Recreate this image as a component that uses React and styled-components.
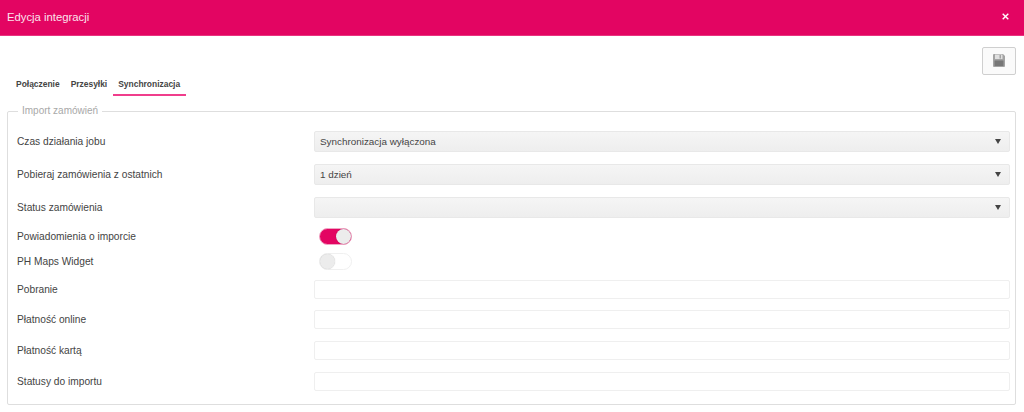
import React from "react";
import styled, { createGlobalStyle } from "styled-components";

const GlobalStyle = createGlobalStyle`
  html, body {
    margin: 0;
    padding: 0;
    background: #fff;
    font-family: "Liberation Sans", Arial, sans-serif;
  }
`;

const Page = styled.div`
  width: 1024px;
  height: 412px;
  overflow: hidden;
  background: #fff;
`;

const Header = styled.header`
  height: 36px;
  box-sizing: border-box;
  padding: 0 15px 2px 7px;
  display: flex;
  align-items: center;
  justify-content: space-between;
  background: #e30562;
  border-bottom: 1px solid #e8347f;
  color: #fff;
`;

const Title = styled.div`
  font-size: 11.3px;
  color: #fbe3ec;
`;

const CloseButton = styled.button`
  border: 0;
  padding: 0;
  background: none;
  display: flex;
  cursor: pointer;
`;

const Toolbar = styled.div`
  display: flex;
  justify-content: flex-end;
  padding: 11px 8px 0 0;
  height: 29px;
`;

const SaveButton = styled.button`
  width: 34px;
  height: 28px;
  box-sizing: border-box;
  padding: 0 0 1px;
  display: flex;
  align-items: center;
  justify-content: center;
  background: #fafafa;
  border: 1px solid #cfcfcf;
  border-radius: 2px;
`;

const Tabs = styled.nav`
  display: flex;
  padding-left: 10.5px;
  height: 20px;
`;

const Tab = styled.div`
  padding: 3px 5.5px 0;
  height: 20px;
  box-sizing: border-box;
  font-size: 8.45px;
  line-height: 11px;
  font-weight: 700;
  color: #444;
  border-bottom: 2px solid ${(p) => (p.$active ? "#f03d8c" : "transparent")};
`;

const Fieldset = styled.fieldset`
  margin: 11px 8px 0 7px;
  padding: 16px 5px 0 9px;
  height: 298px;
  box-sizing: border-box;
  border: 1px solid #dedede;
  border-radius: 2px;
  min-width: 0;
`;

const Legend = styled.legend`
  margin-left: 1px;
  padding: 0 4px;
  font-size: 10px;
  line-height: 8px;
  color: #a8a8a8;
`;

const Row = styled.div`
  display: grid;
  grid-template-columns: 297px 1fr;
  align-items: center;
  height: ${(p) => p.$height}px;
  margin-bottom: ${(p) => p.$gap}px;
`;

const Label = styled.label`
  font-size: 10.2px;
  color: #444;
`;

const SelectBox = styled.div`
  height: 21px;
  box-sizing: border-box;
  padding: 0 8px 0 5px;
  display: flex;
  align-items: center;
  justify-content: space-between;
  font-size: 9.9px;
  color: #444;
  background: linear-gradient(#f5f5f5, #eeeeee);
  border: 1px solid #e8e8e8;
  border-radius: 2px;
`;

const Caret = styled.span`
  width: 0;
  height: 0;
  border-left: 3px solid transparent;
  border-right: 3px solid transparent;
  border-top: 5px solid #444;
`;

const TextInput = styled.input`
  display: block;
  width: 100%;
  height: 19px;
  box-sizing: border-box;
  background: #fff;
  border: 1px solid #efefef;
  border-radius: 2px;
  outline: none;
`;

const Toggle = styled.div`
  width: 33px;
  height: 17px;
  box-sizing: border-box;
  margin-left: 5px;
  display: flex;
  justify-content: ${(p) => (p.$on ? "flex-end" : "flex-start")};
  background: ${(p) => (p.$on ? "#e30562" : "#fff")};
  border: 1px solid ${(p) => (p.$on ? "#f0a5c4" : "#f0f0f0")};
  border-radius: 9px;
`;

const Knob = styled.span`
  width: 15px;
  height: 15px;
  border-radius: 50%;
  background: #ececec;
  box-shadow: 0 0 1px rgba(0, 0, 0, 0.25);
`;

const SelectRow = ({ label, value, gap = 12 }) => (
  <Row $height={21} $gap={gap}>
    <Label>{label}</Label>
    <SelectBox>
      <span>{value}</span>
      <Caret />
    </SelectBox>
  </Row>
);

const ToggleRow = ({ label, on, gap }) => (
  <Row $height={17} $gap={gap}>
    <Label>{label}</Label>
    <Toggle $on={on}>
      <Knob />
    </Toggle>
  </Row>
);

const InputRow = ({ label, gap = 12 }) => (
  <Row $height={19} $gap={gap}>
    <Label>{label}</Label>
    <TextInput />
  </Row>
);

export default function App() {
  return (
    <Page>
      <GlobalStyle />
      <Header>
        <Title>Edycja integracji</Title>
        <CloseButton aria-label="Zamknij">
          <svg width="7" height="7" viewBox="0 0 7 7">
            <path d="M.7.7l5.6 5.6M6.3.7L.7 6.3" stroke="#fff" strokeWidth="1.4" />
          </svg>
        </CloseButton>
      </Header>
      <Toolbar>
        <SaveButton aria-label="Zapisz">
          <svg width="12" height="13" viewBox="0 0 12 13">
            <path d="M0 1a1 1 0 0 1 1-1h9l2 2v10a1 1 0 0 1-1 1H1a1 1 0 0 1-1-1z" fill="#a3a3a3" />
            <rect x="2" y="0.5" width="7.5" height="4.5" fill="#e0e0e0" />
            <rect x="6.5" y="1" width="1.5" height="3.5" fill="#a3a3a3" />
            <rect x="1.5" y="6.5" width="9" height="5.5" fill="#777" />
          </svg>
        </SaveButton>
      </Toolbar>
      <Tabs>
        <Tab>Połączenie</Tab>
        <Tab>Przesyłki</Tab>
        <Tab $active>Synchronizacja</Tab>
      </Tabs>
      <Fieldset>
        <Legend>Import zamówień</Legend>
        <SelectRow label="Czas działania jobu" value="Synchronizacja wyłączona" />
        <SelectRow label="Pobieraj zamówienia z ostatnich" value="1 dzień" />
        <SelectRow label="Status zamówienia" value="" gap={10} />
        <ToggleRow label="Powiadomienia o imporcie" on gap={8} />
        <ToggleRow label="PH Maps Widget" gap={10} />
        <InputRow label="Pobranie" gap={11} />
        <InputRow label="Płatność online" />
        <InputRow label="Płatność kartą" />
        <InputRow label="Statusy do importu" />
      </Fieldset>
    </Page>
  );
}
